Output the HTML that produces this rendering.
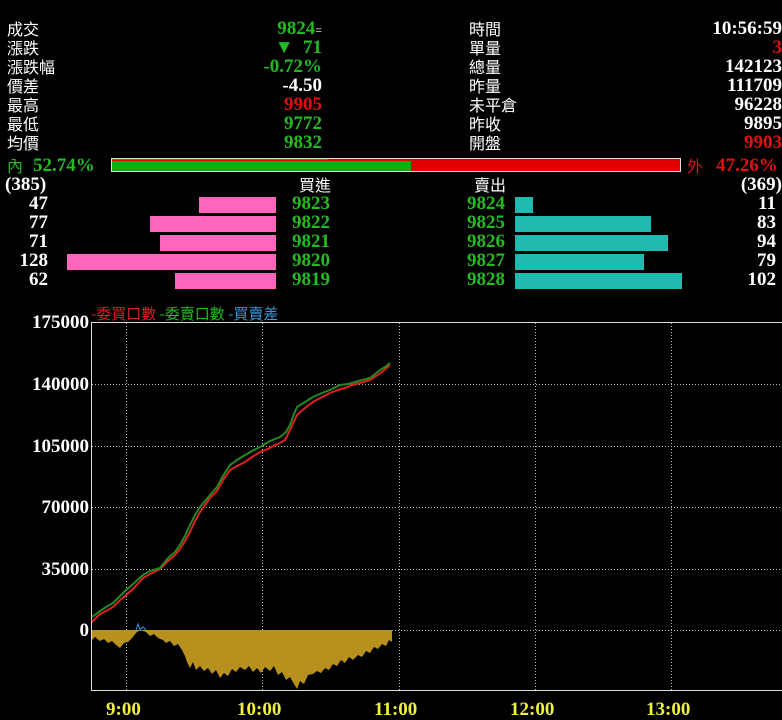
<!DOCTYPE html>
<html><head><meta charset="utf-8"><style>
body{margin:0;background:#000;width:782px;height:720px;overflow:hidden;position:relative;font-family:"Liberation Serif","WenQuanYi Zen Hei",serif;}
.t{position:absolute;font-size:17px;line-height:19px;white-space:nowrap;}
.c{font-family:"WenQuanYi Zen Hei","Noto Sans CJK TC",sans-serif;font-size:16px;color:#fff;}
.n{font-weight:bold;font-size:19px;}
.r{text-align:right;}
.g{color:#22bb22}.rd{color:#e01010}.w{color:#fff}.y{color:#f0f040}
.b{position:absolute;height:16px;}
</style></head><body>
<div class="t c" style="left:7px;top:19px">成交</div>
<div class="t c" style="left:7px;top:38px">漲跌</div>
<div class="t c" style="left:7px;top:57px">漲跌幅</div>
<div class="t c" style="left:7px;top:76px">價差</div>
<div class="t c" style="left:7px;top:95px">最高</div>
<div class="t c" style="left:7px;top:114px">最低</div>
<div class="t c" style="left:7px;top:133px">均價</div>
<div class="t n r g" style="right:460px;top:19px">9824<span class="w" style="font-size:12px;font-weight:normal">=</span></div>
<div class="t n r g" style="right:460px;top:38px">▼&nbsp; 71</div>
<div class="t n r g" style="right:460px;top:57px">-0.72%</div>
<div class="t n r w" style="right:460px;top:76px">-4.50</div>
<div class="t n r rd" style="right:460px;top:95px">9905</div>
<div class="t n r g" style="right:460px;top:114px">9772</div>
<div class="t n r g" style="right:460px;top:133px">9832</div>
<div class="t c" style="left:469px;top:19px">時間</div>
<div class="t c" style="left:469px;top:38px">單量</div>
<div class="t c" style="left:469px;top:57px">總量</div>
<div class="t c" style="left:469px;top:76px">昨量</div>
<div class="t c" style="left:469px;top:95px">未平倉</div>
<div class="t c" style="left:469px;top:114px">昨收</div>
<div class="t c" style="left:469px;top:133px">開盤</div>
<div class="t n r w" style="right:0;top:19px">10:56:59</div>
<div class="t n r rd" style="right:0;top:38px">3</div>
<div class="t n r w" style="right:0;top:57px">142123</div>
<div class="t n r w" style="right:0;top:76px">111709</div>
<div class="t n r w" style="right:0;top:95px">96228</div>
<div class="t n r w" style="right:0;top:114px">9895</div>
<div class="t n r rd" style="right:0;top:133px">9903</div>
<div class="t c g" style="left:7px;top:156px;color:#22bb22">內</div>
<div class="t n g" style="left:33px;top:156px">52.74%</div>
<div style="position:absolute;left:111px;top:158px;width:570px;height:14px;border:1px solid #ddd;box-sizing:border-box;background:#e00000"></div>
<div style="position:absolute;left:112px;top:161px;width:299px;height:10px;background:#11aa11"></div>
<div style="position:absolute;left:112px;top:159px;width:216px;height:1px;background:#11aa11"></div>
<div style="position:absolute;left:328px;top:159px;width:352px;height:1px;background:#a02020"></div>
<div class="t c rd" style="left:687px;top:156px;color:#e01010">外</div>
<div class="t n rd" style="left:716px;top:156px">47.26%</div>
<div class="t n w" style="left:5px;top:175px">(385)</div>
<div class="t c" style="left:299px;top:175px">買進</div>
<div class="t c" style="left:474px;top:175px">賣出</div>
<div class="t n w r" style="right:0;top:175px">(369)</div>
<div class="t n w r" style="right:734px;top:194px">47</div>
<div class="t n w r" style="right:734px;top:213px">77</div>
<div class="t n w r" style="right:734px;top:232px">71</div>
<div class="t n w r" style="right:734px;top:251px">128</div>
<div class="t n w r" style="right:734px;top:270px">62</div>
<div class="b" style="left:199px;width:77px;top:197px;background:#ff66bb"></div>
<div class="b" style="left:150px;width:126px;top:216px;background:#ff66bb"></div>
<div class="b" style="left:160px;width:116px;top:235px;background:#ff66bb"></div>
<div class="b" style="left:67px;width:209px;top:254px;background:#ff66bb"></div>
<div class="b" style="left:175px;width:101px;top:273px;background:#ff66bb"></div>
<div class="t n g r" style="right:452px;top:194px">9823</div>
<div class="t n g r" style="right:452px;top:213px">9822</div>
<div class="t n g r" style="right:452px;top:232px">9821</div>
<div class="t n g r" style="right:452px;top:251px">9820</div>
<div class="t n g r" style="right:452px;top:270px">9819</div>
<div class="t n g r" style="right:277px;top:194px">9824</div>
<div class="t n g r" style="right:277px;top:213px">9825</div>
<div class="t n g r" style="right:277px;top:232px">9826</div>
<div class="t n g r" style="right:277px;top:251px">9827</div>
<div class="t n g r" style="right:277px;top:270px">9828</div>
<div class="b" style="left:515px;width:18px;top:197px;background:#20bbb0"></div>
<div class="b" style="left:515px;width:136px;top:216px;background:#20bbb0"></div>
<div class="b" style="left:515px;width:153px;top:235px;background:#20bbb0"></div>
<div class="b" style="left:515px;width:129px;top:254px;background:#20bbb0"></div>
<div class="b" style="left:515px;width:167px;top:273px;background:#20bbb0"></div>
<div class="t n w r" style="right:6px;top:194px">11</div>
<div class="t n w r" style="right:6px;top:213px">83</div>
<div class="t n w r" style="right:6px;top:232px">94</div>
<div class="t n w r" style="right:6px;top:251px">79</div>
<div class="t n w r" style="right:6px;top:270px">102</div>
<div class="t c" style="left:91px;top:304px;font-size:15px"><span style="color:#e02020">-委買口數</span> <span style="color:#22bb22">-委賣口數</span> <span style="color:#3399dd">-買賣差</span></div>
<div class="t n w r" style="right:693px;top:313px">175000</div>
<div class="t n w r" style="right:693px;top:375px">140000</div>
<div class="t n w r" style="right:693px;top:437px">105000</div>
<div class="t n w r" style="right:693px;top:498px">70000</div>
<div class="t n w r" style="right:693px;top:560px">35000</div>
<div class="t n w r" style="right:693px;top:621px">0</div>
<div class="t n y" style="left:106px;top:700px">9:00</div>
<div class="t n y" style="left:237px;top:700px">10:00</div>
<div class="t n y" style="left:374px;top:700px">11:00</div>
<div class="t n y" style="left:510px;top:700px">12:00</div>
<div class="t n y" style="left:646px;top:700px">13:00</div>
<svg width="782" height="720" style="position:absolute;left:0;top:0">
<g stroke="#bbb" stroke-width="1" stroke-dasharray="1,2">
<line x1="126.5" y1="323" x2="126.5" y2="690"/><line x1="262.5" y1="323" x2="262.5" y2="690"/><line x1="399.5" y1="323" x2="399.5" y2="690"/><line x1="535.5" y1="323" x2="535.5" y2="690"/><line x1="671.5" y1="323" x2="671.5" y2="690"/>
<line x1="92" y1="384.5" x2="782" y2="384.5"/><line x1="92" y1="446.5" x2="782" y2="446.5"/><line x1="92" y1="507.5" x2="782" y2="507.5"/><line x1="92" y1="569.5" x2="782" y2="569.5"/><line x1="92" y1="630.5" x2="782" y2="630.5"/>
</g>
<path d="M91.5 322.5H782M91.5 322V690.5H782" stroke="#ddd" fill="none"/>
<path d="M92 630 L92 640 L95 637 L100 641 L104 639 L108 643 L112 641 L116 645 L120 648 L124 643 L128 642 L132 638 L136 633 L140 630 L146 632 L150 636 L154 634 L158 638 L163 640 L166 643 L170 641 L174 646 L178 644 L182 650 L185 656 L187 662 L190 668 L193 662 L196 670 L200 666 L204 671 L208 668 L212 674 L216 670 L220 678 L224 673 L228 676 L232 669 L236 672 L240 667 L245 670 L249 666 L253 672 L257 668 L261 673 L265 667 L270 671 L274 666 L278 675 L282 672 L286 680 L290 677 L294 684 L297 689 L300 681 L304 684 L308 675 L313 674 L317 671 L321 673 L325 668 L329 670 L333 664 L337 666 L341 660 L345 663 L349 657 L353 660 L358 655 L362 657 L366 651 L370 653 L374 647 L378 649 L382 644 L386 646 L389 640 L392 642 L392 630 Z" fill="#b8901e"/>
<path d="M136 630 L138 624 L140 630 L143 627 L146 630" stroke="#3399dd" fill="none"/>
<path d="M92 622 L96 618 L100 614 L106 611 L113 607 L119 601 L125 596 L133 589 L143 578 L150 574 L160 569 L168 561 L175 555 L180 549 L185 541 L190 532 L195 521 L200 512 L205 505 L210 498 L217 491 L223 480 L230 470 L237 466 L245 462 L252 457 L260 452 L268 449 L275 445 L280 443 L285 440 L290 430 L297 415 L305 408 L313 402 L322 397 L330 393 L338 390 L345 388 L352 385 L360 383 L370 380 L376 376 L382 372 L390 365" stroke="#dd2020" stroke-width="2" fill="none"/>
<path d="M92 617 L96 614 L100 611 L106 607 L113 603 L119 597 L125 591 L133 584 L143 575 L150 571 L160 568 L168 558 L175 552 L180 545 L185 536 L190 525 L195 515 L200 507 L205 501 L210 495 L217 487 L223 476 L230 465 L237 460 L245 455 L252 451 L260 447 L270 441 L280 437 L286 432 L290 425 L294 414 L297 407 L305 402 L313 397 L322 393 L330 390 L340 385 L348 384 L355 382 L362 380 L370 378 L375 374 L380 370 L385 367 L390 363" stroke="#228822" stroke-width="2" fill="none"/>
</svg>
</body></html>
